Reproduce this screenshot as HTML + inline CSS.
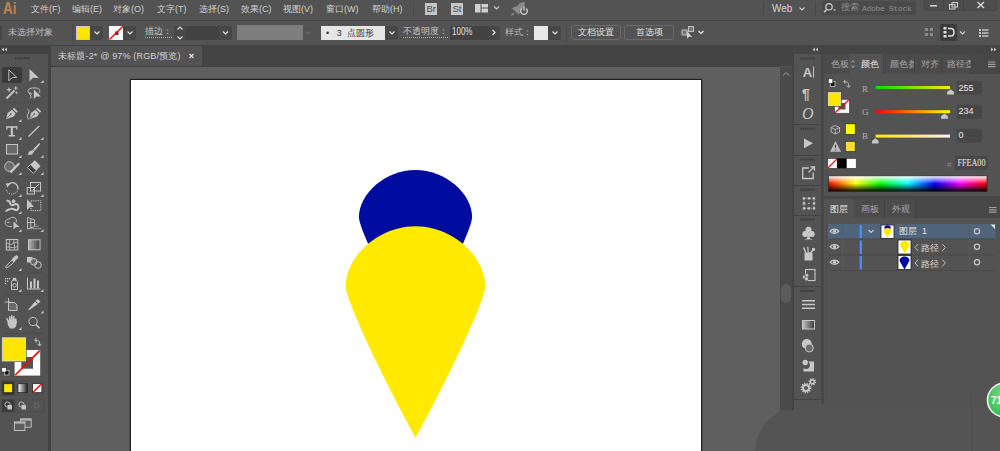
<!DOCTYPE html>
<html><head><meta charset="utf-8">
<style>
*{margin:0;padding:0;box-sizing:border-box}
html,body{width:1000px;height:451px;overflow:hidden;background:#535353;font-family:"Liberation Sans",sans-serif;color:#cfcfcf}
.a{position:absolute}
.t{position:absolute;white-space:nowrap;font-size:9px;line-height:12px}
.chev{position:absolute;background:#474747;border-radius:0 2px 2px 0}
.btn{position:absolute;border:1px solid #6b6b6b;border-radius:3px}
</style></head><body>
<!-- MENU BAR -->
<div class="a" style="left:0;top:20px;width:1000px;height:1px;background:#444"></div>
<div class="t" style="left:3px;top:-0.5px;font-size:16px;line-height:17px;color:#c4824d;font-weight:bold;transform:scaleX(0.84);transform-origin:0 0">Ai</div>
<div class="t" style="left:31px;top:3px">文件(F)</div>
<div class="t" style="left:72px;top:3px">编辑(E)</div>
<div class="t" style="left:113px;top:3px">对象(O)</div>
<div class="t" style="left:157px;top:3px">文字(T)</div>
<div class="t" style="left:199px;top:3px">选择(S)</div>
<div class="t" style="left:241px;top:3px">效果(C)</div>
<div class="t" style="left:283px;top:3px">视图(V)</div>
<div class="t" style="left:326px;top:3px">窗口(W)</div>
<div class="t" style="left:372px;top:3px">帮助(H)</div>
<div class="a" style="left:413px;top:2px;width:1px;height:14px;background:#4a4a4a"></div>
<div class="a" style="left:425px;top:3px;width:12px;height:12px;background:#c6c6c6"></div>
<div class="t" style="left:426.5px;top:3px;font-size:9.5px;color:#4a4a4a;letter-spacing:-0.2px">Br</div>
<div class="a" style="left:451px;top:3px;width:12px;height:12px;background:#c6c6c6"></div>
<div class="t" style="left:452.5px;top:3px;font-size:9.5px;color:#4a4a4a;letter-spacing:-0.2px">St</div>
<div class="a" style="left:763px;top:2px;width:1px;height:14px;background:#4a4a4a"></div>
<div class="t" style="left:772px;top:3px;font-size:10px;color:#d2d2d2">Web</div>
<div class="a" style="left:815px;top:2px;width:1px;height:14px;background:#4a4a4a"></div>
<div class="a" style="left:822px;top:1px;width:94px;height:14px;background:#4a4a4a;border-radius:2px"></div>
<div class="t" style="left:841px;top:2px;font-family:'Liberation Mono',monospace;font-size:9px;color:#8e8e8e">搜索</div><div class="t" style="left:862px;top:2.5px;font-family:'Liberation Mono',monospace;font-size:8px;color:#8e8e8e;letter-spacing:-0.3px">Adobe Stock</div>
<div class="a" style="left:924px;top:-2px;width:73px;height:13px;background:#4d4d4d;border-radius:3px;border:1px solid #474747"></div>
<div class="a" style="left:943px;top:0;width:1px;height:11px;background:#444"></div>
<div class="a" style="left:963px;top:0;width:1px;height:11px;background:#444"></div>

<!-- CONTROL BAR -->
<div class="a" style="left:0;top:25px;width:2px;height:15px;background:#464646"></div>
<div class="t" style="left:8px;top:26px;color:#bdbdbd">未选择对象</div>
<div class="a" style="left:72px;top:24px;width:1px;height:18px;background:#4a4a4a"></div>
<div class="a" style="left:76px;top:26px;width:14px;height:14px;background:#ffe600;border:1px solid #c8c8c8"></div>
<div class="chev" style="left:90px;top:26px;width:13px;height:14px"></div>
<div class="a" style="left:109px;top:26px;width:14px;height:14px;background:#fff"></div>
<div class="chev" style="left:123px;top:26px;width:13px;height:14px"></div>
<div class="t" style="left:145px;top:26px;color:#c6c6c6;border-bottom:1px dotted #a8a8a8;line-height:11px">描边：</div>
<div class="a" style="left:174px;top:26px;width:12px;height:14px;background:#474747;border-radius:2px 0 0 2px"></div>
<div class="a" style="left:186px;top:26px;width:33px;height:14px;background:#424242"></div>
<div class="chev" style="left:219px;top:26px;width:13px;height:14px"></div>
<div class="a" style="left:237px;top:25px;width:66px;height:15px;background:#7d7d7d"></div>
<div class="a" style="left:321px;top:26px;width:64px;height:14px;background:#e6e6e6"></div>
<div class="t" style="left:326px;top:26.5px;color:#333">•&nbsp;&nbsp;&nbsp;3&nbsp;&nbsp;点圆形</div>
<div class="chev" style="left:385px;top:26px;width:13px;height:14px"></div>
<div class="t" style="left:403px;top:26px;color:#c6c6c6;border-bottom:1px dotted #a8a8a8;line-height:11px">不透明度：</div>
<div class="a" style="left:450px;top:26px;width:38px;height:14px;background:#424242;border-radius:2px 0 0 2px"></div>
<div class="t" style="left:452px;top:25.5px;color:#e0e0e0;font-size:10px;transform:scaleX(0.8);transform-origin:0 0">100%</div>
<div class="chev" style="left:488px;top:26px;width:12px;height:14px"></div>
<div class="t" style="left:505px;top:26px;color:#bdbdbd">样式：</div>
<div class="a" style="left:534px;top:26px;width:14px;height:14px;background:#e8e8e8"></div>
<div class="chev" style="left:548px;top:26px;width:13px;height:14px"></div>
<div class="a" style="left:566px;top:24px;width:1px;height:18px;background:#4a4a4a"></div>
<div class="btn" style="left:571px;top:25px;width:50px;height:15px"></div>
<div class="t" style="left:578px;top:26px;color:#e0e0e0">文档设置</div>
<div class="btn" style="left:624px;top:25px;width:50px;height:15px"></div>
<div class="t" style="left:636px;top:26px;color:#e0e0e0">首选项</div>
<div class="a" style="left:940px;top:24px;width:17px;height:17px;background:#3c3c3c;border-radius:2px"></div>

<!-- DOC TAB BAR -->
<div class="a" style="left:51px;top:45px;width:742px;height:21px;background:#434343"></div>
<div class="a" style="left:51px;top:46px;width:151px;height:20px;background:#535353"></div>
<div class="t" style="left:58px;top:50px;color:#d0d0d0;letter-spacing:0.17px">未标题-2* @ 97% (RGB/预览)</div>

<!-- CANVAS -->
<div class="a" style="left:51px;top:66px;width:729px;height:1px;background:#3f3f3f"></div>
<div class="a" style="left:51px;top:67px;width:729px;height:384px;background:#5f5f5f"></div>
<div class="a" style="left:130px;top:79px;width:572px;height:380px;background:#fff;border:1px solid #1e1e1e;box-shadow:0 0 2px rgba(0,0,0,0.35)"></div>

<svg class="a" style="left:0;top:0" width="1000" height="451" viewBox="0 0 1000 451">
  <path fill="#000b9f" transform="translate(415.5,169.9) scale(0.812,0.787) translate(-415.5,-226.2)" d="M415.5,437.8 C382,376.2 345.8,300.9 345.8,286.3 C345.8,255.4 379.3,226.2 415.5,226.2 C451.7,226.2 485.2,255.4 485.2,286.3 C485.2,300.9 449,376.2 415.5,437.8 Z"/>
  <path fill="#ffea00" d="M415.5,437.8 C382,376.2 345.8,300.9 345.8,286.3 C345.8,255.4 379.3,226.2 415.5,226.2 C451.7,226.2 485.2,255.4 485.2,286.3 C485.2,300.9 449,376.2 415.5,437.8 Z"/>
</svg>

<!-- LEFT TOOLBAR -->
<div class="a" style="left:0;top:45px;width:48px;height:9px;background:#424242"></div>
<div class="a" style="left:48px;top:45px;width:3px;height:406px;background:#434343"></div>
<div class="a" style="left:2px;top:67px;width:20px;height:16px;background:#3a3a3a;border-radius:2px"></div>

<svg class="a" style="left:0;top:0" width="60" height="451" viewBox="0 0 60 451">
<g fill="none" stroke="#4c4c4c" stroke-width="1">
  <path d="M5 102.5H44M5 177H44M5 233.5H44M5 273H44M5 294.5H44M5 333.5H44M5 376.5H44"/>
</g>
<!-- header arrows -->
<path fill="#c0c0c0" d="M1.5 49.5L4 47.5V51.5Z M4.5 49.5L7 47.5V51.5Z"/>
<!-- grip -->
<path stroke="#3c3c3c" stroke-width="2" stroke-dasharray="1.6 0.6" d="M15 58.2H30"/>
<g fill="#c6c6c6" stroke="none">
  <!-- corner triangles -->
  <path d="M43.5 80V83H40.5Z M21.5 119V122H18.5Z M21.5 137V140H18.5Z M43.5 137V140H40.5Z M21.5 155V158H18.5Z M43.5 155V158H40.5Z M21.5 172V175H18.5Z M43.5 172V175H40.5Z M21.5 194V197H18.5Z M43.5 194V197H40.5Z M21.5 211V214H18.5Z M21.5 229V232H18.5Z M43.5 229V232H40.5Z M21.5 268V271H18.5Z M21.5 289V292H18.5Z M43.5 289V292H40.5Z M43.5 310.5V313.5H40.5Z M21.5 327V330H18.5Z"/>
  <!-- direct selection -->
  <path d="M29.5 69V81.5L33 77.8L39 78Z"/>
  <!-- pen -->
  <path d="M6 119.3L7.6 113L12 109.8L15.6 113.4L13.8 116.4Z M12.7 109.1L14.1 107.7L17.8 111.4L16.4 112.8Z"/>
  <path d="M29.4 119.3L31 113L35.4 109.8L39 113.4L37.2 116.4Z M36.1 109.1L37.5 107.7L41.2 111.4L39.8 112.8Z"/>
  <!-- T -->
  <path d="M6.2 126.2H17.5V129.5H16.2V127.8H12.9V135H15V136.5H8.7V135H10.8V127.8H7.5V129.5H6.2Z"/>
  <!-- brush -->
  <path d="M39.2 143L40.3 144L34.5 151L33 149.6Z M33 150L34.2 151.3L32 154.5L27.8 155L29 151.5Z"/>
  <!-- eraser -->
  <path d="M34.8 160.2L40.6 166L36.2 170.4L30.4 164.6Z"/><path d="M30.4 164.6L36.2 170.4L33.2 173.4L27.4 167.6Z" fill="#3e3e3e" stroke="#c6c6c6" stroke-width="0.9"/>
  <!-- free transform arrow -->
  <path d="M27 199V210L30 207L34 207Z"/>
  <!-- shape builder arrow -->
  <path d="M13.5 221.5V229.5L15.8 227.3L19.5 227Z"/>
  <!-- hand -->
  <path d="M7.5 322L6 318.5L7.2 318L9 320.5V316.3L10.3 316L11 320V315.2L12.3 315L13 320V316L14.3 316L15 321V318.5L16.3 318.5L17 322L16 326.5L14 328.5H10L7.8 325Z"/>
  <!-- graph bars -->
  <path d="M30 281.5H32V288.5H30Z M33.5 278.5H35.5V288.5H33.5Z M37 280.5H39V288.5H37Z"/>
  <path d="M33.8 89.2V99L36.4 96.4L40.8 96.6Z"/>
  <!-- sparkles -->
  <path d="M9 86.8L9.7 89L12 89.7L9.7 90.4L9 92.6L8.3 90.4L6 89.7L8.3 89Z M15.8 85.8L16.4 87.5L18.2 88.1L16.4 88.7L15.8 90.4L15.2 88.7L13.4 88.1L15.2 87.5Z M16.5 91.2L17 92.3L18 92.8L17 93.3L16.5 94.4L16 93.3L15 92.8L16 92.3Z"/>
  <path d="M5.8 183.2L10.5 183.5L7.2 187.5Z"/>
  <path d="M5 278h1.2v1.2H5z M7 278h1.2v1.2H7z M9 278h1.2v1.2H9z M5 280.5h1.2v1.2H5z M7 280.5h1.2v1.2H7z M5 283h1.2v1.2H5z"/>
  <!-- blend square -->
  <path d="M27 257H32.5V262.5H27Z"/>
  <!-- slice blade -->
  <path d="M27.5 310.5L35 301.5L38 304L30 309.5Z M35.5 301L37.5 299L40.5 301.5L38.5 303.5Z"/>
</g>
<g fill="none" stroke="#c6c6c6" stroke-width="1">
  <!-- selection hollow arrow -->
  <path d="M8.8 69.8V80.8L12.3 77.6L16.8 77.4Z" stroke="#bdbdbd"/>
  <!-- magic wand -->
  <path d="M6.5 98.5L14.5 90.5" stroke-width="1.8"/>
  
  <!-- lasso -->
  <path d="M38.5 93C40.5 91.5 40.5 88.5 36 88C31 87.5 27.5 89 28 91.5C28.3 93.2 30 94 32 94 M30.5 92C29.5 93 29.2 94.5 30.5 95.5C31.5 96.5 31 97.8 30 98.5"/>
  <!-- curvature squiggle -->
  <path d="M27.3 108.9C29 109.8 29.5 111 28.5 113C27.2 115.2 26.5 117.5 29.2 119.6"/>
  <!-- line -->
  <path d="M28.5 136.5L39.2 126" stroke-width="1.2"/>
  <!-- rect -->
  <rect x="6.5" y="144.5" width="11" height="9.5" fill="#6a6a6a"/>
  <!-- shaper -->
  <circle cx="9.5" cy="166.5" r="4.8" fill="#6a6a6a"/>
  <path d="M10.5 172.5L19.2 163.2" stroke-width="2.2"/>
  <!-- rotate -->
  <path d="M8.5 184.5C10.5 182.5 13.5 182.3 15.5 183.8C17.5 185.3 18.2 187.5 17.8 189.5" stroke-width="1.3"/><path d="M17.5 190.5C16.5 193 13.5 194.5 11 194C8.5 193.5 6.5 191.5 6 189.5" stroke-dasharray="1.2 1"/>
  <!-- scale -->
  <rect x="30.5" y="182.5" width="10" height="8.5"/>
  <rect x="27.2" y="187.5" width="7.3" height="6.5"/>
  <path d="M33 190L39 184"/>
  <!-- puppet warp -->
  <path d="M6.5 200.8C8.5 200.3 10 201.5 10 203.3C11 205.5 13.5 205.5 15.5 204C17.5 203.5 18.5 205.5 18.5 207.5C18.2 209.5 17 210.5 15.5 210C13.5 209 11 208.3 9 209.3C8 210.2 6.5 211 5.5 210.5" stroke-width="2"/>
  <circle cx="13.5" cy="201.3" r="1.5" fill="#c6c6c6"/><circle cx="9.3" cy="207" r="1" stroke="#535353" stroke-width="0.8"/>
  <!-- free transform dotted rect -->
  <rect x="31" y="200.8" width="9.8" height="9.8" stroke-dasharray="1.3 0.9"/>
  <!-- shape builder ellipses -->
  <path d="M12 226.5C9.5 226.8 5.2 226.3 5.2 222.5C5.2 219.8 7.5 218.8 9.5 219C10.5 217.3 12.5 217 14 217.5C16.5 218.5 17 220.5 16 222.5" stroke-width="0.9"/>
  <path d="M6.8 222.3H9.8" stroke-width="0.9"/>
  <!-- perspective grid -->
  <path d="M27.5 217.5V229L34.5 226.5V219.8Z M30.8 218.5V228 M27.5 222.5H34.5" stroke-width="0.9"/><path d="M34.5 224.3H36.5 M34.5 226.4H39 M28 228.6H41.5" stroke-width="0.8" stroke="#a8a8a8"/>
  <!-- mesh -->
  <rect x="6.3" y="239.5" width="11.5" height="10.5"/>
  <path d="M6.5 244C9 242 10 246 12 244C14 242 15 243 17.5 242 M9.5 239.5C10.5 242 8 246 10 250 M14 239.5C13 243 16 246 14 250 M6.5 247.5C9 246 12 249 17.5 246.5" stroke-width="0.8"/>
  <!-- eyedropper -->
  <path d="M6.5 268L5.5 267C7.5 264.5 10.5 261.5 12.5 259.5L14.5 261.5C12.5 263.5 9.5 266.5 6.5 268Z" stroke-width="1"/><path d="M11.5 259.5L15.2 255.8C16 255 17.5 255 18 256C18.5 257 18 258 17.3 258.8L13.5 262.5Z" fill="#c6c6c6" stroke="none"/>
  <!-- blend circles -->
  <circle cx="33.8" cy="261.8" r="3.3" fill="#6a6a6a"/>
  <circle cx="38" cy="265" r="3.3"/>
  <!-- sprayer -->
  <path d="M11.5 281.8C11.5 280.8 12 280.3 13 280.3H16C17 280.3 17.5 280.8 17.5 281.8V289.5H11.5Z" stroke-width="1"/>
  <rect x="12.8" y="277.8" width="3.4" height="2.2" fill="#c6c6c6" stroke="none"/>
  <circle cx="14.5" cy="285.3" r="1.8" stroke-width="0.9"/>
  <!-- graph axis -->
  <path d="M27.5 277.5V289H40.5"/>
  <!-- artboard -->
  <path d="M8.5 298V304 M4.5 302H10.5" stroke-width="0.9"/>
  <path d="M8.5 302.5H14.5L17 305V310.5H8.5Z" fill="#6a6a6a"/>
  <!-- zoom -->
  <circle cx="33" cy="321.5" r="4.2"/>
  <path d="M36 324.5L39.5 328.3" stroke-width="1.6"/>
</g>
<path d="M6.6 118.7L10.4 114.5 M30 118.7L33.8 114.5" stroke="#535353" stroke-width="0.8"/><circle cx="10.8" cy="114.1" r="0.9" fill="#535353"/><circle cx="34.2" cy="114.1" r="0.9" fill="#535353"/>
<!-- gradient tool -->
<defs>
  <linearGradient id="gt" x1="0" x2="1"><stop offset="0" stop-color="#b4b4b4"/><stop offset="1" stop-color="#3c3c3c"/></linearGradient>
  <linearGradient id="gs" x1="0" x2="1"><stop offset="0" stop-color="#fff"/><stop offset="1" stop-color="#222"/></linearGradient>
</defs>
<rect x="28.5" y="239.8" width="11.5" height="10" fill="url(#gt)" stroke="#c6c6c6" stroke-width="1"/>
<!-- stroke swatch -->
<rect x="14.6" y="350" width="25.6" height="25.6" fill="#fff"/>
<rect x="21.3" y="357" width="11.7" height="11.7" fill="#535353"/>
<path d="M15.2 375L39.7 350.6" stroke="#ff0000" stroke-width="1.6"/>
<!-- fill swatch -->
<rect x="1.3" y="336.8" width="25.3" height="25.2" fill="#3a3a3a"/>
<rect x="2.3" y="337.8" width="23.3" height="23.2" fill="#ffe600" stroke="#d8d8d8" stroke-width="1"/>
<!-- swap arrow -->
<path d="M34.5 340.5L36 338.5V342.5 M35.5 340.5H37.5C39 340.5 39.5 341.5 39.5 343V345 M37.5 343.8L39.5 346L41.5 343.8" fill="none" stroke="#c6c6c6" stroke-width="1"/>
<!-- default -->
<rect x="4.5" y="370.5" width="4.5" height="4.5" fill="#111" stroke="#c6c6c6" stroke-width="0.8"/>
<rect x="1.8" y="367.5" width="4.5" height="4.5" fill="#fff" stroke="#222" stroke-width="0.6"/>
<!-- color row -->
<rect x="1.3" y="381" width="42.5" height="14.5" fill="none" stroke="#4c4c4c" stroke-width="0.8"/>
<rect x="2" y="381.3" width="12.6" height="14" fill="#393939" rx="1"/>
<rect x="3.7" y="383.7" width="9" height="9" fill="#ffe600" stroke="#222" stroke-width="0.8"/>
<rect x="18" y="383.7" width="9.3" height="9" fill="url(#gs)" stroke="#222" stroke-width="0.8"/>
<rect x="32.6" y="383.7" width="9.3" height="9" fill="#fff" stroke="#222" stroke-width="0.8"/>
<path d="M33 392.3L41.5 384" stroke="#f00" stroke-width="1.4"/>
<!-- draw mode row -->
<rect x="1.3" y="399.5" width="42.5" height="12.5" fill="none" stroke="#4c4c4c" stroke-width="0.8"/>
<rect x="2" y="399.7" width="12.6" height="12.2" fill="#3c3c3c"/>
<g fill="none" stroke="#c6c6c6" stroke-width="0.9">
  <circle cx="7.5" cy="404.5" r="2.6"/><rect x="8" y="405.5" width="3.5" height="3.5" fill="#c6c6c6"/>
  <circle cx="21.5" cy="404.5" r="2.6"/><rect x="22" y="405.5" width="3.5" height="3.5" fill="#c6c6c6"/>
  <circle cx="36.5" cy="405.5" r="2.6" stroke="#6e6e6e"/>
</g>
<!-- screen mode -->
<g fill="#5e5e5e" stroke="#c6c6c6" stroke-width="0.9">
  <rect x="20.6" y="418.8" width="10.6" height="8.4"/>
  <rect x="14.4" y="421.9" width="10.6" height="8.6"/>
</g>
<path d="M20.6 419.8H31.2 M14.4 422.9H25" stroke="#c6c6c6" stroke-width="1.2"/>
</svg>

<div class="a" style="left:755px;top:407px;width:300px;height:100px;background:#545454;border-radius:45px 0 0 0"></div>
<!-- RIGHT DOCK -->
<div class="a" style="left:780px;top:67px;width:12px;height:343px;background:#4a4a4a"></div>
<div class="a" style="left:792px;top:67px;width:2px;height:343px;background:#434343"></div>
<div class="a" style="left:781px;top:284px;width:10px;height:19px;background:#5c5c5c;border-radius:5px"></div>
<div class="a" style="left:793px;top:45px;width:207px;height:9px;background:#454545"></div>
<div class="a" style="left:793px;top:54px;width:1px;height:346px;background:#434343"></div>
<div class="a" style="left:821px;top:54px;width:3px;height:350px;background:#474747"></div>
<!-- icon column separators -->
<div class="a" style="left:794px;top:124px;width:27px;height:1px;background:#434343"></div>
<div class="a" style="left:794px;top:155px;width:27px;height:1px;background:#434343"></div>
<div class="a" style="left:794px;top:185px;width:27px;height:1px;background:#434343"></div>
<div class="a" style="left:794px;top:215px;width:27px;height:1px;background:#434343"></div>
<div class="a" style="left:794px;top:286px;width:27px;height:1px;background:#434343"></div>
<div class="a" style="left:794px;top:399px;width:27px;height:1px;background:#434343"></div>

<!-- COLOR PANEL -->
<div class="a" style="left:824px;top:54px;width:176px;height:20px;background:#474747"></div>
<div class="a" style="left:824px;top:54px;width:25px;height:20px;background:#4b4b4b"></div>
<div class="a" style="left:849px;top:54px;width:34px;height:20px;background:#535353"></div>
<div class="a" style="left:883px;top:54px;width:31px;height:20px;background:#4b4b4b;border-left:1px solid #434343"></div>
<div class="a" style="left:914px;top:54px;width:27px;height:20px;background:#4b4b4b;border-left:1px solid #434343"></div>
<div class="a" style="left:941px;top:54px;width:30px;height:20px;background:#4b4b4b;border-left:1px solid #434343;border-right:1px solid #434343"></div>
<div class="a" style="left:824px;top:54px;width:176px;height:20px;overflow:hidden">
  <div class="t" style="left:7px;top:4px;color:#a8a8a8;width:18px;overflow:hidden">色板</div>
  <div class="t" style="left:36.5px;top:4px;color:#e6e6e6">颜色</div>
  <div class="t" style="left:66px;top:4px;color:#a8a8a8;width:24px;overflow:hidden">颜色参考</div>
  <div class="t" style="left:97px;top:4px;color:#a8a8a8">对齐</div>
  <div class="t" style="left:123px;top:4px;color:#a8a8a8;width:24px;overflow:hidden">路径查找器</div>
</div>

<!-- LAYERS PANEL -->
<div class="a" style="left:824px;top:196px;width:176px;height:3px;background:#474747"></div>
<div class="a" style="left:824px;top:199px;width:176px;height:19px;background:#474747"></div>
<div class="a" style="left:824px;top:199px;width:30px;height:19px;background:#535353"></div>
<div class="a" style="left:854px;top:199px;width:31px;height:19px;background:#4b4b4b;border-right:1px solid #434343"></div>
<div class="a" style="left:885px;top:199px;width:31px;height:19px;background:#4b4b4b;border-right:1px solid #434343"></div>
<div class="t" style="left:830px;top:203px;color:#e6e6e6">图层</div>
<div class="t" style="left:861px;top:203px;color:#a8a8a8">画板</div>
<div class="t" style="left:892px;top:203px;color:#a8a8a8">外观</div>
<svg class="a" style="left:770px;top:0" width="230" height="451" viewBox="770 0 230 451">
<!-- dock header arrows -->
<path fill="#bdbdbd" d="M812.5 49.5L815 47.5V51.5Z M815.5 49.5L818 47.5V51.5Z M991 47.5L993.5 49.5L991 51.5Z M994 47.5L996.5 49.5L994 51.5Z"/>
<!-- scrollbar up -->
<path d="M783 75.5L786 72.5L789 75.5" fill="none" stroke="#a8a8a8" stroke-width="1"/>
<!-- grips -->
<g stroke="#3c3c3c" stroke-width="2" stroke-dasharray="1.6 0.6">
  <path d="M800.5 58.5H815 M800.5 128.8H815 M800.5 159.5H815 M800.5 189.8H815 M800.5 219.5H815 M800.5 291H815"/>
</g>
<g fill="#c8c8c8">
  <!-- play -->
  <path d="M804 138.5V148.2L813 143.3Z"/>
  <!-- club -->
  <circle cx="808.5" cy="229.8" r="3"/><circle cx="805.3" cy="234" r="3"/><circle cx="811.7" cy="234" r="3"/>
  <path d="M808 233H809L810 238.5L813 239.5H804L807 238.5Z"/>
  <!-- brushes -->
  <path d="M804.5 252.5H812.5V260.5H804.5Z"/>
  <path d="M805.3 253L803.2 248.5C803 247.5 803.5 247 804.3 247.3L806.5 252.8Z M807.6 253L807.2 247C807.2 246.2 808.2 246.2 808.4 247L808.8 253Z M809.6 253L812.2 249.8C811.5 249 812 247.8 813 248C814 247.5 815.5 248.5 815 249.5C815.5 250.5 814.5 251.3 813.3 250.8L810.8 253.3Z"/>
  <path d="M802.8 197.2h2.4v2.4h-2.4z M812.8 197.2h2.4v2.4h-2.4z M802.8 207.2h2.4v2.4h-2.4z M812.8 207.2h2.4v2.4h-2.4z M807.8 197.2h2.4v2.4h-2.4z M807.8 207.2h2.4v2.4h-2.4z M802.8 202.2h2.4v2.4h-2.4z M812.8 202.2h2.4v2.4h-2.4z M808.3 202.7h1.4v1.4h-1.4z"/>
  <!-- lines -->
  <path d="M802 300H815V301.5H802Z M802 303.8H815V305.3H802Z M802 307.5H815V309H802Z"/>
  <!-- circles -->
  <circle cx="806.8" cy="344" r="5"/>
  <!-- shape builder -->
  <path d="M803.5 361.5H814V371.5H803.5V368.3A3.6 3.6 0 1 0 808.2 361.5Z"/>
  <circle cx="805.2" cy="362.5" r="2.7"/>
</g>
<text x="802.8" y="76.8" font-family="Liberation Sans" font-weight="bold" font-size="13" fill="#c8c8c8">A</text>
<path d="M813.6 66.5V77.5" stroke="#c8c8c8" stroke-width="1"/>
<text x="802" y="98.5" font-family="Liberation Sans" font-weight="bold" font-size="14" fill="#c8c8c8">¶</text>
<text x="802" y="118.5" font-family="Liberation Serif" font-style="italic" font-size="16" fill="#c8c8c8">O</text>
<g fill="none" stroke="#c8c8c8" stroke-width="1.3">
  <!-- export -->
  <path d="M809 168H802.7V178.5H813.2V172.5 M808.5 172.5L814.5 166.5 M810.5 166.8H814.5V170.8"/>
  <!-- dotted box -->
  <rect x="804" y="198.3" width="10" height="10" stroke-dasharray="1 1" stroke-width="0.8"/>
  <!-- symbol box -->
  <rect x="805.5" y="269.5" width="9.5" height="11" stroke-width="1.1"/>
  <!-- gradient rect border -->
  <!-- gears -->
  <circle cx="806" cy="388" r="3" stroke-width="2"/>
  <circle cx="812.3" cy="381.8" r="2" stroke-width="1.5"/>
</g>
<g stroke="#c8c8c8" stroke-width="1.6" stroke-dasharray="1.2 1.2">
  <circle cx="806" cy="388" r="4.6" fill="none"/>
  <circle cx="812.3" cy="381.8" r="3.1" fill="none" stroke-width="1.2"/>
</g>
<g fill="#c8c8c8" stroke="#535353" stroke-width="0.7"><circle cx="804.3" cy="277" r="2"/><circle cx="806.8" cy="275.5" r="2"/><circle cx="806.5" cy="278.8" r="2"/></g>
<circle cx="809.3" cy="348" r="4" fill="#6c6c6c" stroke="#c8c8c8" stroke-width="1"/>
<defs><linearGradient id="gr2" x1="0" x2="1"><stop offset="0" stop-color="#c0c0c0"/><stop offset="1" stop-color="#3c3c3c"/></linearGradient>
<linearGradient id="spec" x1="0" x2="1">
 <stop offset="0" stop-color="#ff0000"/><stop offset="0.17" stop-color="#ffff00"/><stop offset="0.33" stop-color="#00ff00"/><stop offset="0.5" stop-color="#00ffff"/><stop offset="0.67" stop-color="#0000ff"/><stop offset="0.83" stop-color="#ff00ff"/><stop offset="1" stop-color="#ff0000"/>
</linearGradient>
<linearGradient id="specv" x1="0" x2="0" y1="0" y2="1">
 <stop offset="0" stop-color="#fff" stop-opacity="1"/><stop offset="0.5" stop-color="#fff" stop-opacity="0"/><stop offset="0.5" stop-color="#000" stop-opacity="0"/><stop offset="1" stop-color="#000" stop-opacity="1"/>
</linearGradient>
<linearGradient id="sr" x1="0" x2="1"><stop offset="0" stop-color="#00e000"/><stop offset="1" stop-color="#ffe600"/></linearGradient>
<linearGradient id="sg" x1="0" x2="1"><stop offset="0" stop-color="#ff0000"/><stop offset="1" stop-color="#ffff00"/></linearGradient>
<linearGradient id="sb" x1="0" x2="1"><stop offset="0" stop-color="#ffe600"/><stop offset="1" stop-color="#fff0ff"/></linearGradient>
</defs>
<rect x="802.5" y="320.5" width="12" height="8.5" fill="url(#gr2)" stroke="#c8c8c8" stroke-width="1"/>

<!-- ===== COLOR PANEL ===== -->
<!-- tab menu icon -->
<path d="M988 62H995.5M988 64.3H995.5M988 66.6H995.5" stroke="#a0a0a0" stroke-width="1.2"/>
<path d="M851.5 62.5L853 60.5L854.5 62.5M851.5 65.5L853 67.5L854.5 65.5" fill="none" stroke="#bdbdbd" stroke-width="0.8"/>
<!-- default fill/stroke icon -->
<rect x="830.5" y="81.5" width="4.5" height="5" fill="#111" stroke="#ccc" stroke-width="0.8"/>
<rect x="828.3" y="78.8" width="4.5" height="4.5" fill="#fff" stroke="#222" stroke-width="0.6"/>
<path d="M843.5 82L844.8 80.3V83.6 M844.5 82H846.5C848 82 848.5 83 848.5 84.5V86.5 M846.8 85.5L848.5 87.5L850.2 85.5" fill="none" stroke="#bdbdbd" stroke-width="1"/>
<!-- stroke swatch -->
<rect x="834.6" y="99.3" width="14.7" height="13.9" fill="#fff" stroke="#3a3a3a" stroke-width="0.6"/>
<rect x="838.5" y="103" width="7" height="6.5" fill="#535353"/>
<path d="M835 112.8L849 99.7" stroke="#f00" stroke-width="1.2"/>
<!-- fill swatch -->
<rect x="828" y="92.2" width="12.9" height="13.8" fill="#ffe600" stroke="#d0d0d0" stroke-width="1"/>
<rect x="827.3" y="91.5" width="14.3" height="15.2" fill="none" stroke="#333" stroke-width="0.6"/>
<!-- labels -->
<text x="862" y="91.5" font-family="Liberation Serif" font-size="9" fill="#b0b0b0">R</text>
<text x="862" y="114.5" font-family="Liberation Serif" font-size="9" fill="#b0b0b0">G</text>
<text x="862" y="138.5" font-family="Liberation Serif" font-size="9" fill="#b0b0b0">B</text>
<!-- sliders -->
<rect x="875.6" y="86" width="74.4" height="3" fill="url(#sr)"/>
<rect x="875.6" y="110.2" width="74.4" height="3" fill="url(#sg)"/>
<rect x="875.6" y="134.6" width="74.4" height="3" fill="url(#sb)"/>
<g fill="#c8c8c8">
  <path d="M947 94.6V92L950.5 89.3L954 92V94.6Z"/>
  <path d="M941 118.8V116.2L944.5 113.5L948 116.2V118.8Z"/>
  <path d="M872 143.5V140.9L875.3 138.2L878.6 140.9V143.5Z"/>
</g>
<!-- value boxes -->
<g fill="#474747">
  <rect x="956.7" y="81" width="25.3" height="13.6" rx="2"/>
  <rect x="956.7" y="104.7" width="25.3" height="14.3" rx="2"/>
  <rect x="956.7" y="128.7" width="25.3" height="14.1" rx="2"/>
  <rect x="954.7" y="156" width="32.8" height="14" rx="2"/>
</g>
<text x="958.5" y="90.5" font-family="Liberation Sans" font-size="9" fill="#e8e8e8">255</text>
<text x="958.5" y="114" font-family="Liberation Sans" font-size="9" fill="#e8e8e8">234</text>
<text x="958.5" y="138" font-family="Liberation Sans" font-size="9" fill="#e8e8e8">0</text>
<text x="957.5" y="166.2" font-family="Liberation Serif" font-size="9.5" fill="#e8e8e8" textLength="28" lengthAdjust="spacingAndGlyphs">FFEA00</text>
<text x="947" y="167" font-family="Liberation Sans" font-size="8" fill="#8c8c8c">#</text>
<!-- cube & warning -->
<g fill="none" stroke="#bdbdbd" stroke-width="0.9">
  <path d="M835.3 125.5L839.5 127.5V132L835.3 134L831.1 132V127.5Z M831.1 127.5L835.3 129.5L839.5 127.5 M835.3 129.5V134"/>
</g>
<path d="M835.5 141L841 151.8H830Z" fill="#bdbdbd"/>
<path d="M835.5 144.5V148.3 M835.5 149.5V150.7" stroke="#535353" stroke-width="1.2"/>
<rect x="845.3" y="123.8" width="10" height="10.6" fill="#ffff00" stroke="#333" stroke-width="0.8"/>
<rect x="845.3" y="141.3" width="10" height="10.3" fill="#f7dc2f" stroke="#333" stroke-width="0.8"/>
<!-- none/black/white -->
<rect x="827.8" y="158.5" width="9.4" height="9.8" fill="#fff" stroke="#333" stroke-width="0.6"/>
<path d="M828 168L837 158.8" stroke="#f00" stroke-width="1.2"/>
<rect x="837.2" y="158.5" width="9.4" height="9.8" fill="#000"/>
<rect x="846.6" y="158.5" width="9.6" height="9.8" fill="#fff" stroke="#333" stroke-width="0.6"/>
<!-- spectrum -->
<rect x="828.4" y="175.8" width="158.6" height="15.8" fill="url(#spec)"/>
<rect x="828.4" y="175.8" width="158.6" height="15.8" fill="url(#specv)"/>
<rect x="828.4" y="175.8" width="158.6" height="15.8" fill="none" stroke="#2a2a2a" stroke-width="0.8"/>

<!-- ===== LAYERS PANEL ===== -->
<path d="M989 207.5H996.5M989 209.8H996.5M989 212.1H996.5" stroke="#a0a0a0" stroke-width="1.2"/>
<rect x="828" y="224" width="167.5" height="14.7" fill="#50647c"/>
<g stroke="#4a4a4a" stroke-width="1">
  <path d="M828 239H995 M828 255H995 M828 270.5H995"/>
</g>
<path d="M842.5 224V270 M969.5 224V270" stroke="#5c5c5c" stroke-width="0.8"/>
<g fill="#4f8af0">
  <rect x="859.6" y="225" width="2.4" height="13"/>
  <rect x="859.6" y="240.5" width="2.4" height="13.5"/>
  <rect x="859.6" y="256" width="2.4" height="13.5"/>
</g>
<!-- eyes -->
<g fill="none" stroke="#c8c8c8" stroke-width="1">
  <path d="M830.2 231.2C832.2 228.3 836.8 228.3 838.8 231.2C836.8 234.1 832.2 234.1 830.2 231.2Z" stroke-width="1.3"/>
  <path d="M830.2 246.7C832.2 243.8 836.8 243.8 838.8 246.7C836.8 249.6 832.2 249.6 830.2 246.7Z" stroke-width="1.3"/>
  <path d="M830.2 262.2C832.2 259.3 836.8 259.3 838.8 262.2C836.8 265.1 832.2 265.1 830.2 262.2Z" stroke-width="1.3"/>
  <circle cx="977" cy="231.3" r="2.6" stroke-width="1.2"/>
  <circle cx="977" cy="246.8" r="2.6" stroke-width="1.2"/>
  <circle cx="977" cy="262.3" r="2.6" stroke-width="1.2"/>
  <path d="M868.5 230L871 232.5L873.5 230" stroke-width="1.2"/>
</g>
<g fill="#c8c8c8"><circle cx="834.5" cy="231.2" r="1.6"/><circle cx="834.5" cy="246.7" r="1.6"/><circle cx="834.5" cy="262.2" r="1.6"/></g>
<path d="M990.5 224.5H995V229Z" fill="#e0e0e0"/>
<!-- thumbnails -->
<rect x="881" y="225" width="13" height="13.3" fill="#fff" stroke="#222" stroke-width="0.8"/>
<path fill="#000b9f" transform="translate(884.3,225.3) scale(0.0473,0.0378) translate(-345.8,-226.2)" d="M415.5,437.8 C382,376.2 345.8,300.9 345.8,286.3 C345.8,255.4 379.3,226.2 415.5,226.2 C451.7,226.2 485.2,255.4 485.2,286.3 C485.2,300.9 449,376.2 415.5,437.8 Z"/>
<path fill="#ffea00" transform="translate(883.5,228) scale(0.0588,0.0454) translate(-345.8,-226.2)" d="M415.5,437.8 C382,376.2 345.8,300.9 345.8,286.3 C345.8,255.4 379.3,226.2 415.5,226.2 C451.7,226.2 485.2,255.4 485.2,286.3 C485.2,300.9 449,376.2 415.5,437.8 Z"/>
<rect x="898" y="240" width="13" height="14" fill="#fff" stroke="#222" stroke-width="0.8"/>
<path fill="#ffea00" transform="translate(900,241) scale(0.0681,0.0591) translate(-345.8,-226.2)" d="M415.5,437.8 C382,376.2 345.8,300.9 345.8,286.3 C345.8,255.4 379.3,226.2 415.5,226.2 C451.7,226.2 485.2,255.4 485.2,286.3 C485.2,300.9 449,376.2 415.5,437.8 Z"/>
<rect x="898" y="255.5" width="13" height="14" fill="#fff" stroke="#222" stroke-width="0.8"/>
<path fill="#000b9f" transform="translate(899.6,256.5) scale(0.0703,0.0605) translate(-345.8,-226.2)" d="M415.5,437.8 C382,376.2 345.8,300.9 345.8,286.3 C345.8,255.4 379.3,226.2 415.5,226.2 C451.7,226.2 485.2,255.4 485.2,286.3 C485.2,300.9 449,376.2 415.5,437.8 Z"/>
<!-- faint lines -->
<path d="M826.5 74V400" stroke="#4e4e4e" stroke-width="1"/>
<path d="M971.5 392V451" stroke="#4e4e4e" stroke-width="1"/>
</svg>

<!-- layer names -->
<div class="t" style="left:899px;top:225px;color:#e6e6e6;font-size:9px">图层&nbsp;&nbsp;1</div>
<div class="t" style="left:921px;top:242px;color:#d8d8d8;font-size:9px">路径</div>
<div class="t" style="left:921px;top:257.5px;color:#d8d8d8;font-size:9px">路径</div>
<svg class="a" style="left:0;top:0" width="1000" height="451" viewBox="0 0 1000 451"><path d="M918.2 244L915 247.5L918.2 251 M942.2 244L945.4 247.5L942.2 251 M918.2 259.5L915 263L918.2 266.5 M942.2 259.5L945.4 263L942.2 266.5" fill="none" stroke="#c8c8c8" stroke-width="0.9"/></svg>
<!-- bottom blob -->

<svg class="a" style="left:0;top:0" width="1000" height="451" viewBox="0 0 1000 451">
<defs><radialGradient id="gb" cx="0.45" cy="0.35" r="0.7"><stop offset="0" stop-color="#6fe07f"/><stop offset="1" stop-color="#2fb54a"/></radialGradient></defs>
<circle cx="1004.5" cy="400" r="17" fill="url(#gb)" stroke="#f0f0f0" stroke-width="1.6"/>
<text x="991" y="404" font-family="Liberation Sans" font-weight="bold" font-size="10" fill="#fff">71</text>
<!-- doc tab close -->
<path d="M189.5 54L193.5 58M193.5 54L189.5 58" stroke="#e0e0e0" stroke-width="1.3"/>
<!-- control bar chevrons -->
<g fill="none" stroke="#e0e0e0" stroke-width="1.2">
  <path d="M94.5 31.5L97 34L99.5 31.5"/>
  <path d="M127.5 31.5L130 34L132.5 31.5"/>
  <path d="M223 31.5L225.5 34L228 31.5"/>
  <path d="M389.5 31.5L392 34L394.5 31.5"/>
  <path d="M552.5 31.5L555 34L557.5 31.5"/>
  <path d="M492.5 30L495 32.5L492.5 35"/>
  <path d="M177.5 29.5L180 27L182.5 29.5 M177.5 36.5L180 39L182.5 36.5"/>
  <path d="M698.5 31L701 33.5L703.5 31" stroke="#e8e8e8"/>
  <path d="M960 31.5L962.5 34L965 31.5" stroke="#c8c8c8"/>
  <path d="M305.5 31.5L308 34L310.5 31.5" stroke="#6a6a6a"/>
  <path d="M494 6.5L496.5 9L499 6.5" stroke="#c8c8c8"/>
  <path d="M799.5 7.5L802 10L804.5 7.5" stroke="#c8c8c8"/>
</g>
<!-- stroke swatch control bar -->
<rect x="115" y="31.5" width="3.5" height="3.5" fill="#444"/>
<path d="M109.5 39.5L123 26.2" stroke="#f00" stroke-width="1.4"/>
<!-- arrange icon -->
<g fill="#767676" stroke="#c0c0c0" stroke-width="1">
  <rect x="682" y="30" width="5" height="5"/>
  <rect x="688.5" y="26.5" width="5" height="5"/>
</g>
<path d="M687 31V38.8L689 36.8L692 37Z" fill="#d0d0d0"/>
<!-- right control icons -->
<g fill="#8a8a8a"><rect x="925" y="28" width="3" height="3"/><rect x="930" y="28" width="3" height="3"/><rect x="925" y="33" width="3" height="3"/><rect x="930" y="33" width="3" height="3"/></g>
<g fill="#e0e0e0"><rect x="943.5" y="27" width="3" height="2.5"/><rect x="943.5" y="31" width="3" height="2.5"/><rect x="943.5" y="35" width="3" height="2.5"/></g>
<path d="M948 28.5H951C953.5 28.5 954 30 954 32.3C954 34.6 953.5 36 951 36H948" fill="none" stroke="#e0e0e0" stroke-width="1.5"/>
<g fill="#c8c8c8"><rect x="979" y="29" width="2" height="2"/><rect x="979" y="32" width="2" height="2"/><rect x="979" y="35" width="2" height="2"/><rect x="982" y="29.3" width="6.5" height="1.4"/><rect x="982" y="32.3" width="6.5" height="1.4"/><rect x="982" y="35.3" width="6.5" height="1.4"/></g>
<!-- menu layout icon -->
<g fill="#d0d0d0"><rect x="475" y="4" width="5.5" height="8.5"/><rect x="481.5" y="4" width="6.5" height="3.5"/><rect x="481.5" y="8.5" width="6.5" height="4"/></g>
<!-- rocket -->
<path d="M513.5 9.5L519.5 3.5C521 2.3 523 2 524.8 2.2C525 4 524.7 6 523.5 7.5L517.5 13.5Z M513.5 9.5L512 9L514.5 6.5L516.5 7Z M517.5 13.5L518 15L520.5 12.5L520 10.5Z" fill="#8a8a8a"/>
<path d="M514 13L511.5 15.5" stroke="#8a8a8a" stroke-width="1.5"/>
<path d="M521.8 8.6A3.3 3.3 0 1 0 526.2 8.6" fill="none" stroke="#d0d0d0" stroke-width="1.3"/>
<path d="M524 6.5V10.8" stroke="#d0d0d0" stroke-width="1.3"/>
<!-- search magnifier -->
<circle cx="829" cy="6.8" r="3.2" fill="none" stroke="#d0d0d0" stroke-width="1.2"/>
<path d="M826.8 9.2L824 12.3" stroke="#d0d0d0" stroke-width="1.5"/>
<path d="M833 9.5H836L834.5 11Z" fill="#d0d0d0"/>
<!-- window controls -->
<path d="M930 5.8H937" stroke="#d8d8d8" stroke-width="1.5"/>
<g fill="none" stroke="#d0d0d0" stroke-width="1"><rect x="949.5" y="4.5" width="5.5" height="4.5"/><rect x="952" y="2.5" width="5.5" height="4.5"/></g>
<path d="M977.5 2L984 8M984 2L977.5 8" stroke="#d8d8d8" stroke-width="1.4"/>
</svg>

</body></html>
